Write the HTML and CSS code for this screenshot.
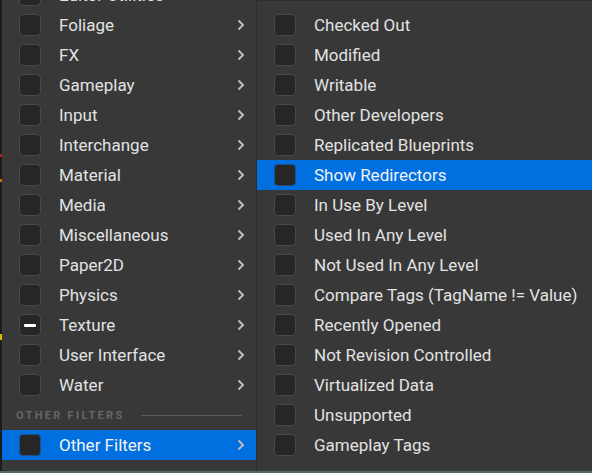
FILE: index.html
```html
<!DOCTYPE html>
<html>
<head>
<meta charset="utf-8">
<link rel="stylesheet" href="styles.css">
</head>
<body>
<div class="screen">
  <div class="edge">
    <span class="spot red s1"></span>
    <span class="spot orange s2"></span>
    <span class="spot yellow s3"></span>
  </div>
  <div class="menu left">
    <div class="list">
      <div class="row"><span class="cb"></span><span class="label">Editor Utilities</span><svg class="chev" viewBox="0 0 8 12"><polyline points="1.5,1.5 6,6 1.5,10.5"/></svg></div>
      <div class="row"><span class="cb"></span><span class="label">Foliage</span><svg class="chev" viewBox="0 0 8 12"><polyline points="1.5,1.5 6,6 1.5,10.5"/></svg></div>
      <div class="row"><span class="cb"></span><span class="label">FX</span><svg class="chev" viewBox="0 0 8 12"><polyline points="1.5,1.5 6,6 1.5,10.5"/></svg></div>
      <div class="row"><span class="cb"></span><span class="label">Gameplay</span><svg class="chev" viewBox="0 0 8 12"><polyline points="1.5,1.5 6,6 1.5,10.5"/></svg></div>
      <div class="row"><span class="cb"></span><span class="label">Input</span><svg class="chev" viewBox="0 0 8 12"><polyline points="1.5,1.5 6,6 1.5,10.5"/></svg></div>
      <div class="row"><span class="cb"></span><span class="label">Interchange</span><svg class="chev" viewBox="0 0 8 12"><polyline points="1.5,1.5 6,6 1.5,10.5"/></svg></div>
      <div class="row"><span class="cb"></span><span class="label">Material</span><svg class="chev" viewBox="0 0 8 12"><polyline points="1.5,1.5 6,6 1.5,10.5"/></svg></div>
      <div class="row"><span class="cb"></span><span class="label">Media</span><svg class="chev" viewBox="0 0 8 12"><polyline points="1.5,1.5 6,6 1.5,10.5"/></svg></div>
      <div class="row"><span class="cb"></span><span class="label">Miscellaneous</span><svg class="chev" viewBox="0 0 8 12"><polyline points="1.5,1.5 6,6 1.5,10.5"/></svg></div>
      <div class="row"><span class="cb"></span><span class="label">Paper2D</span><svg class="chev" viewBox="0 0 8 12"><polyline points="1.5,1.5 6,6 1.5,10.5"/></svg></div>
      <div class="row"><span class="cb"></span><span class="label">Physics</span><svg class="chev" viewBox="0 0 8 12"><polyline points="1.5,1.5 6,6 1.5,10.5"/></svg></div>
      <div class="row"><span class="cb mixed"><span class="dash"></span></span><span class="label">Texture</span><svg class="chev" viewBox="0 0 8 12"><polyline points="1.5,1.5 6,6 1.5,10.5"/></svg></div>
      <div class="row"><span class="cb"></span><span class="label">User Interface</span><svg class="chev" viewBox="0 0 8 12"><polyline points="1.5,1.5 6,6 1.5,10.5"/></svg></div>
      <div class="row"><span class="cb"></span><span class="label">Water</span><svg class="chev" viewBox="0 0 8 12"><polyline points="1.5,1.5 6,6 1.5,10.5"/></svg></div>
      <div class="header"><span class="htext">OTHER FILTERS</span><span class="hline"></span></div>
      <div class="row selected"><span class="cb"></span><span class="label">Other Filters</span><svg class="chev" viewBox="0 0 8 12"><polyline points="1.5,1.5 6,6 1.5,10.5"/></svg></div>
    </div>
  </div>
  <div class="divider"></div>
  <div class="menu right">
    <div class="list sub">
      <div class="row"><span class="cb"></span><span class="label">Checked Out</span></div>
      <div class="row"><span class="cb"></span><span class="label">Modified</span></div>
      <div class="row"><span class="cb"></span><span class="label">Writable</span></div>
      <div class="row"><span class="cb"></span><span class="label">Other Developers</span></div>
      <div class="row"><span class="cb"></span><span class="label">Replicated Blueprints</span></div>
      <div class="row selected"><span class="cb"></span><span class="label">Show Redirectors</span></div>
      <div class="row"><span class="cb"></span><span class="label">In Use By Level</span></div>
      <div class="row"><span class="cb"></span><span class="label">Used In Any Level</span></div>
      <div class="row"><span class="cb"></span><span class="label">Not Used In Any Level</span></div>
      <div class="row"><span class="cb"></span><span class="label">Compare Tags (TagName != Value)</span></div>
      <div class="row"><span class="cb"></span><span class="label">Recently Opened</span></div>
      <div class="row"><span class="cb"></span><span class="label">Not Revision Controlled</span></div>
      <div class="row"><span class="cb"></span><span class="label">Virtualized Data</span></div>
      <div class="row"><span class="cb"></span><span class="label">Unsupported</span></div>
      <div class="row"><span class="cb"></span><span class="label">Gameplay Tags</span></div>
    </div>
  </div>
</div>
<div class="bottom"></div>
</body>
</html>
```
FILE: styles.css
```css
* { box-sizing: border-box; }
html, body { margin: 0; padding: 0; }
body {
  width: 592px;
  height: 473px;
  overflow: hidden;
  background: #151515;
  font-family: Roboto, "Noto Sans", sans-serif;
  display: flex;
  flex-direction: column;
}
.screen {
  display: flex;
  height: 471px;
}
.edge {
  width: 2px;
  background: #1b1b1b;
  display: flex;
  flex-direction: column;
}
.spot { display: block; width: 2px; height: 3px; }
.red { background: #b02020; }
.orange { background: #d07010; }
.yellow { background: #d8c000; }
.s1 { margin-top: 154px; }
.s2 { margin-top: 22px; }
.s3 { margin-top: 152px; height: 6px; }
.menu {
  background: #383838;
  overflow: hidden;
}
.left { width: 254px; }
.divider { width: 1px; background: #2c2c2c; }
.right {
  flex: 1;
  border-top: 1px solid #2e2e2e;
}
.list {
  display: flex;
  flex-direction: column;
  margin-top: -20px;
}
.list.sub { margin-top: 9px; }
.row {
  height: 30px;
  display: flex;
  align-items: center;
  padding-left: 17px;
  padding-right: 11px;
  color: #e2e2e2;
  font-size: 17px;
}
.sub .row { padding-left: 17px; }
.row.selected { background: #0070e0; color: #f2f2f2; }
.cb {
  width: 22px;
  height: 22px;
  border-radius: 4px;
  background: #262626;
  border: 1px solid #474747;
  flex: none;
  display: flex;
  align-items: center;
  justify-content: center;
}
.selected .cb { border-color: #1e4f86; background: #262626; }
.dash { width: 12px; height: 3px; background: #ffffff; border-radius: 1px; }
.label {
  margin-left: 18px;
  flex: 1;
  white-space: nowrap;
}
.chev {
  width: 8px;
  height: 12px;
  flex: none;
}
.chev polyline {
  fill: none;
  stroke: #bdbdbd;
  stroke-width: 2;
}
.header {
  height: 30px;
  display: flex;
  align-items: center;
  padding-left: 14px;
  padding-right: 14px;
}
.htext {
  font-size: 11px;
  letter-spacing: 2.3px;
  color: #666666;
  font-weight: 700;
  white-space: nowrap;
}
.hline {
  flex: 1;
  height: 1px;
  background: #5c5c5c;
  margin-left: 16px;
}
.bottom {
  height: 2px;
  background: #566868;
}
```
